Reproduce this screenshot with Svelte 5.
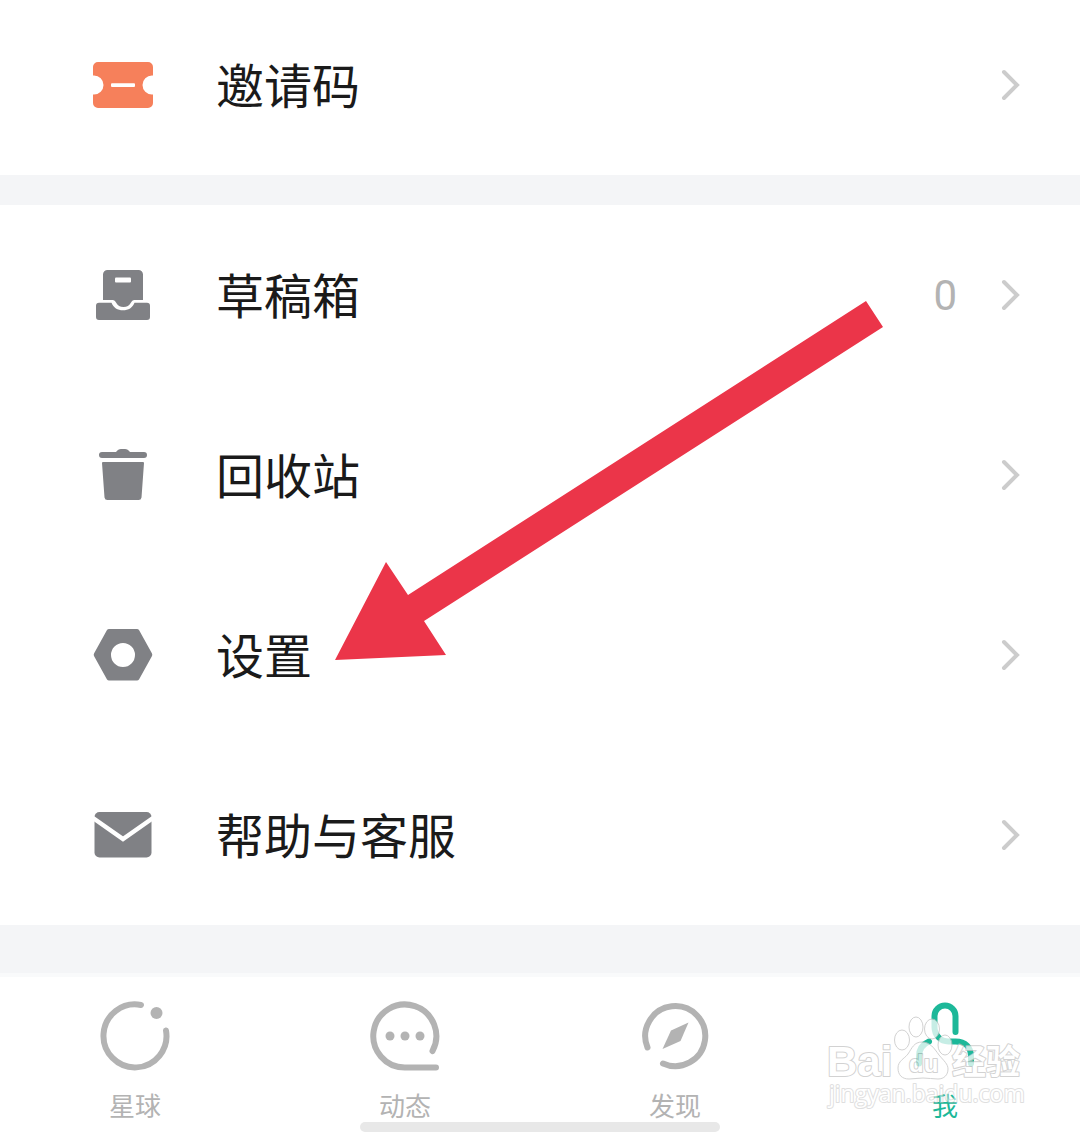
<script lang="ts">
	type Row = { icon: string; label: string; count?: number };

	const rows: Row[] = [
		{ icon: 'drafts', label: '草稿箱', count: 0 },
		{ icon: 'trash', label: '回收站' },
		{ icon: 'settings', label: '设置' },
		{ icon: 'mail', label: '帮助与客服' }
	];

	const tabs = [
		{ icon: 'planet', label: '星球' },
		{ icon: 'message', label: '动态' },
		{ icon: 'compass', label: '发现' },
		{ icon: 'me', label: '我' }
	];

	let active = $state('me');
</script>

{#snippet row(item: Row)}
	<button class="row" type="button">
		<svg class="icon" viewBox="0 0 64 64" aria-hidden="true">
			{#if item.icon === 'ticket'}
				<path fill="#f6805b" d="M7 9h50a5 5 0 0 1 5 5v8.500h-1a9.500 9.500 0 0 0 0 19h1v8.500a5 5 0 0 1-5 5H7a5 5 0 0 1-5-5v-8.500h1a9.500 9.500 0 0 0 0-19h-1v-8.500a5 5 0 0 1 5-5z" />
				<rect x="20" y="30.3" width="24" height="3.8" rx="1" fill="#fff" />
			{:else if item.icon === 'drafts'}
				<path d="M16.500 7h31a4.500 4.500 0 0 1 4.500 4.500V37h-8.500c-2 0-2.500 1-3.500 2.500a8.500 8.500 0 0 1-15 0C24 38 23.500 37 21.500 37H12V11.500A4.500 4.500 0 0 1 16.500 7z" />
				<rect x="24" y="14.500" width="16" height="5" rx="1" fill="#fff" />
				<path d="M8 39.700h12.500c2 5 6 7.500 11.500 7.500s9.500-2.500 11.500-7.500H56a3 3 0 0 1 3 3V54a3 3 0 0 1-3 3H8a3 3 0 0 1-3-3V42.700a3 3 0 0 1 3-3z" />
			{:else if item.icon === 'trash'}
				<path d="M11 9h14c1.500-2 3-3 5-3h4c2 0 3.500 1 5 3h14a3 3 0 0 1 0 6H11a3 3 0 0 1 0-6z" />
				<path d="M12 19h40a1 1 0 0 1 1 1l-2.500 34.500a3 3 0 0 1-3 2.500h-31a3 3 0 0 1-3-2.500L11 20a1 1 0 0 1 1-1z" />
			{:else if item.icon === 'settings'}
				<path fill-rule="evenodd" d="M18 6h28a2.500 2.500 0 0 1 2 1l13 23.500a3 3 0 0 1 0 2.500L48 56.500a2.500 2.500 0 0 1-2 1H18a2.500 2.500 0 0 1-2-1L3 33a3 3 0 0 1 0-2.500L16 7a2.500 2.500 0 0 1 2-1zM32 20a12 12 0 1 0 0 24a12 12 0 1 0 0-24z" />
			{:else}
				<rect x="3.500" y="9" width="57" height="45.500" rx="5" />
				<path d="M2 15l30 21 30-21" fill="none" stroke="#fff" stroke-width="4.500" />
			{/if}
		</svg>
		<span class="label">{item.label}</span>
		{#if item.count !== undefined}
			<span class="count">{item.count}</span>
		{/if}
		<svg class="chevron" viewBox="0 0 20 32" aria-hidden="true">
			<path d="M4 3l13 13L4 29" />
		</svg>
	</button>
{/snippet}

<main>
	<section class="invite">
		{@render row({ icon: 'ticket', label: '邀请码' })}
	</section>

	<section class="tools">
		{#each rows as item}
			{@render row(item)}
		{/each}
		<svg class="arrow" viewBox="0 0 550 362" aria-hidden="true">
			<path d="M0 359L51 261L73 294L531 0L548 26L89 320L111 354z" />
		</svg>
	</section>

	<nav>
		{#each tabs as tab}
			<button class="tab" class:active={active === tab.icon} type="button" onclick={() => (active = tab.icon)}>
				<svg viewBox="0 0 80 80" aria-hidden="true">
					{#if tab.icon === 'planet'}
						<path d="M46 9A31.500 31.500 0 1 0 71 34.500" />
						<circle class="dot" cx="61.500" cy="17" r="6" />
					{:else if tab.icon === 'message'}
						<path d="M67.500 55A31.500 31.500 0 1 0 40 71.500h31" />
						<circle class="dot" cx="25" cy="40" r="4.500" />
						<circle class="dot" cx="40" cy="40" r="4.500" />
						<circle class="dot" cx="55" cy="40" r="4.500" />
					{:else if tab.icon === 'compass'}
						<path d="M12.500 51.500A30 30 0 1 1 28 67.500" />
						<path class="dot" d="M53.500 26.500L45.500 45L27.500 53L36 34.500z" />
					{:else}
						<path d="M50.500 36V20a10.500 10.500 0 0 0-21 0v11c0 8 6 14.500 14 14.500h7c10 0 15.500 6 15.500 15v7M24 45.500c-7 3-10 8-10 15v7" />
					{/if}
				</svg>
				<span>{tab.label}</span>
			</button>
		{/each}
		<div class="handle"></div>
		<svg class="watermark" viewBox="0 0 210 110" aria-hidden="true">
			<text x="7" y="71" class="latin">Bai</text>
			<ellipse cx="82" cy="35" rx="7.500" ry="10" />
			<ellipse cx="96" cy="22" rx="7" ry="10" />
			<ellipse cx="112" cy="24" rx="7.500" ry="10" />
			<ellipse cx="125" cy="40" rx="7" ry="10" />
			<path d="M102 37c8 0 12 6 17 13 5 6 9 9 9 14 0 6-4 10-10 10-5 0-10-1-15-1s-9 1-14 1c-7 0-11-4-11-11 0-7 6-9 10-14 4-6 6-12 14-12z" />
			<text x="89" y="67" class="du">du</text>
			<text x="132" y="69" class="han">经验</text>
			<text x="9" y="97" class="url">jingyan.baidu.com</text>
		</svg>
	</nav>
</main>

<style>
	:global(body) {
		margin: 0;
		background: #f4f5f7;
	}
	main {
		font-family: 'Noto Sans CJK SC', sans-serif;
		color: #1a1a1a;
		overflow: hidden;
	}
	button {
		border: none;
		background: none;
		font: inherit;
		color: inherit;
		cursor: pointer;
	}
	section {
		position: relative;
		background: #fff;
	}
	.invite {
		margin-top: -5px;
		margin-bottom: 30px;
	}
	.tools {
		margin-bottom: 48px;
	}
	.row {
		display: flex;
		align-items: center;
		width: 100%;
		padding: 58px 60px 58px 91px;
		text-align: left;
	}
	.icon {
		width: 64px;
		height: 64px;
		margin-right: 61px;
		fill: #808185;
	}
	.label {
		flex: 1;
		padding-bottom: 4px;
		font-size: 48px;
		line-height: 60px;
	}
	.count {
		margin-right: 43px;
		padding-top: 2px;
		font-family: Roboto, sans-serif;
		font-size: 42px;
		line-height: 62px;
		color: #b3b3b3;
	}
	.chevron {
		width: 20px;
		height: 32px;
		fill: none;
		stroke: #ccc;
		stroke-width: 4;
		stroke-linecap: round;
	}
	.arrow {
		position: absolute;
		top: 96px;
		left: 335px;
		width: 550px;
		height: 362px;
		fill: #eb3549;
		pointer-events: none;
	}
	nav {
		position: relative;
		display: flex;
		border-top: 4px solid #f9fafb;
		background: #fff;
	}
	.tab {
		flex: 1;
		display: flex;
		flex-direction: column;
		align-items: center;
		padding: 19px 0 7px;
		font-size: 26px;
		line-height: 40px;
		color: #b3b3b3;
	}
	.tab svg {
		width: 80px;
		height: 80px;
		margin-bottom: 9px;
		fill: none;
		stroke: currentColor;
		stroke-width: 6;
		stroke-linecap: round;
	}
	.tab .dot {
		fill: currentColor;
		stroke: none;
	}
	.tab.active {
		color: #1db899;
	}
	.handle {
		position: absolute;
		bottom: 0;
		left: 33.33%;
		width: 33.33%;
		height: 10px;
		border-radius: 5px;
		background: #e8e8e8;
	}
	.watermark {
		position: absolute;
		right: 50px;
		bottom: 17px;
		width: 210px;
		height: 110px;
		fill: #fff;
		stroke: #c4c4c4;
		stroke-width: 1;
		stroke-linejoin: round;
		opacity: 0.75;
		pointer-events: none;
	}
	.watermark text {
		font-family: 'Liberation Sans', sans-serif;
		paint-order: stroke;
		stroke-width: 2;
	}
	.watermark .latin {
		font-size: 42px;
		font-weight: bold;
	}
	.watermark .du {
		font-size: 24px;
		font-weight: bold;
	}
	.watermark .han {
		font-family: 'Noto Sans CJK SC', sans-serif;
		font-size: 34px;
		font-weight: bold;
	}
	.watermark .url {
		font-family: 'Open Sans', sans-serif;
		font-size: 23px;
		opacity: 0.7;
	}
</style>
